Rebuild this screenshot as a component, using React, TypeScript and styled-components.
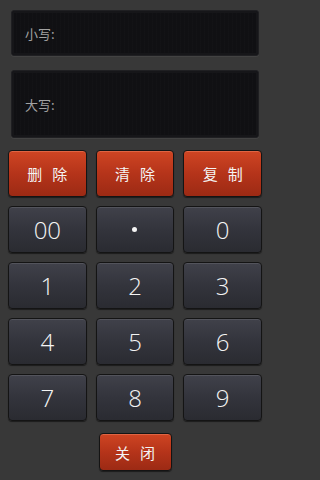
import React from 'react'
import styled, { createGlobalStyle } from 'styled-components'

const GlobalStyle = createGlobalStyle`
  html, body {
    margin: 0;
    padding: 0;
    background: #383838;
  }
  body {
    font-family: "Noto Sans CJK SC", "Liberation Sans", sans-serif;
  }
`

const Screen = styled.div`
  width: 270px;
  height: 480px;
  box-sizing: border-box;
  padding-top: 10px;
  background: #383838;
  display: flex;
  flex-direction: column;
`

const Display = styled.div<{ $height: number }>`
  margin: 0 11px;
  height: ${p => p.$height}px;
  box-sizing: border-box;
  border-radius: 3px;
  background:
    repeating-linear-gradient(90deg, rgba(255,255,255,0.012) 0 1px, transparent 1px 4px),
    #101013;
  border: 1px solid #1f1f22;
  box-shadow: inset 0 0 0 2px #161619, 0 1px 0 rgba(255,255,255,0.05);
  display: flex;
  align-items: center;
  padding-left: 13px;

  & + & {
    margin-top: 14px;
  }
`

const Label = styled.span`
  font-size: 13px;
  color: #a2a2a2;
`

const Pad = styled.div`
  margin-top: 12px;
  padding: 0 8px;
  display: grid;
  grid-template-columns: repeat(3, 1fr);
  grid-auto-rows: 47px;
  gap: 9px;
`

const Key = styled.button<{ $red?: boolean }>`
  box-sizing: border-box;
  border: 1px solid #141414;
  border-radius: 4px;
  padding: 0;
  margin: 0;
  cursor: pointer;
  color: #f4f4f4;
  display: flex;
  align-items: center;
  justify-content: center;
  background: ${p =>
    p.$red
      ? 'linear-gradient(180deg, #cf4523 0%, #b5341a 50%, #9c2a14 100%)'
      : 'linear-gradient(180deg, #40414a 0%, #33343c 50%, #2a2b31 100%)'};
  box-shadow: inset 0 1px 0 ${p => (p.$red ? 'rgba(255,160,130,0.35)' : 'rgba(255,255,255,0.1)')},
    0 1px 1px rgba(0,0,0,0.5);
  font-family: ${p =>
    p.$red
      ? '"Noto Sans CJK SC", sans-serif'
      : '"Open Sans", "Liberation Sans", sans-serif'};
  font-size: ${p => (p.$red ? '15px' : '24px')};
  font-weight: ${p => (p.$red ? 400 : 300)};
  letter-spacing: ${p => (p.$red ? '10px' : '0')};
  text-indent: ${p => (p.$red ? '10px' : '0')};
`

const Dot = styled.span`
  width: 5px;
  height: 5px;
  border-radius: 50%;
  background: #f4f4f4;
`

const Footer = styled.div`
  margin-top: 12px;
  display: flex;
  justify-content: center;
`

const CloseKey = styled(Key)`
  width: 73px;
  height: 38px;
  font-size: 15px;
`

const keys: (string | null)[] = ['00', null, '0', '1', '2', '3', '4', '5', '6', '7', '8', '9']

export default function App () {
  return (
    <Screen>
      <GlobalStyle />
      <Display $height={46}>
        <Label>小写:</Label>
      </Display>
      <Display $height={68}>
        <Label>大写:</Label>
      </Display>
      <Pad>
        <Key $red>删除</Key>
        <Key $red>清除</Key>
        <Key $red>复制</Key>
        {keys.map((k, i) => (
          <Key key={i}>{k === null ? <Dot /> : k}</Key>
        ))}
      </Pad>
      <Footer>
        <CloseKey $red>关闭</CloseKey>
      </Footer>
    </Screen>
  )
}
